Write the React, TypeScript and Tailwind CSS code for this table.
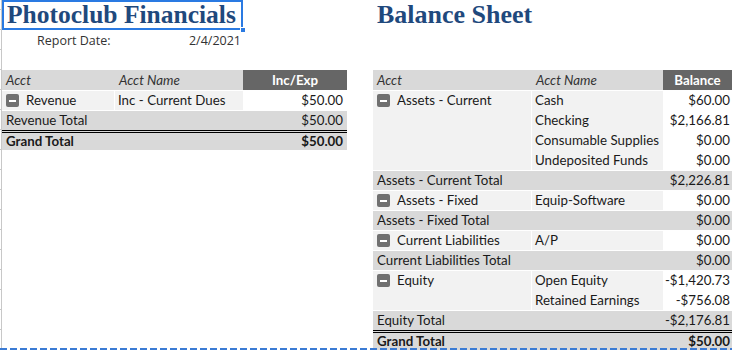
import { Fragment } from "react";

type Line = { name: string; value: string };
type Group = { acct: string; lines: Line[]; total: string };

const incomeGroups: Group[] = [
  {
    acct: "Revenue",
    lines: [{ name: "Inc - Current Dues", value: "$50.00" }],
    total: "$50.00",
  },
];

const balanceGroups: Group[] = [
  {
    acct: "Assets - Current",
    lines: [
      { name: "Cash", value: "$60.00" },
      { name: "Checking", value: "$2,166.81" },
      { name: "Consumable Supplies", value: "$0.00" },
      { name: "Undeposited Funds", value: "$0.00" },
    ],
    total: "$2,226.81",
  },
  {
    acct: "Assets - Fixed",
    lines: [{ name: "Equip-Software", value: "$0.00" }],
    total: "$0.00",
  },
  {
    acct: "Current Liabilities",
    lines: [{ name: "A/P", value: "$0.00" }],
    total: "$0.00",
  },
  {
    acct: "Equity",
    lines: [
      { name: "Open Equity", value: "-$1,420.73" },
      { name: "Retained Earnings", value: "-$756.08" },
    ],
    total: "-$2,176.81",
  },
];

interface PivotProps {
  groups: Group[];
  valueLabel: string;
  grandTotal: string;
  acctW: string;
  nameW: string;
  valW: string;
  valPad: string;
}

function MinusBox() {
  return (
    <span className="w-[13px] h-[13px] rounded-[2px] bg-[#707070] flex items-center justify-center shrink-0">
      <span className="w-[7px] h-[2px] bg-white" />
    </span>
  );
}

function PivotTable({
  groups,
  valueLabel,
  grandTotal,
  acctW,
  nameW,
  valW,
  valPad,
}: PivotProps) {
  return (
    <div className="flex flex-col shrink-0 text-[13.3px] leading-5 text-[#1a1a1a] font-['Lato',sans-serif]">
      <div className="flex h-5">
        <div className={`${acctW} bg-[#d9d9d9] pl-1 italic text-[#333]`}>Acct</div>
        <div className={`${nameW} bg-[#d9d9d9] pl-1 italic text-[#333]`}>Acct Name</div>
        <div className={`${valW} bg-[#666666] text-white font-bold text-center`}>
          {valueLabel}
        </div>
      </div>
      {groups.map((g) => (
        <Fragment key={g.acct}>
          <div className="flex">
            <div
              className={`${acctW} bg-[#f2f2f2] border-r border-t border-white flex items-start gap-[7px] pl-1 pt-[3px]`}
            >
              <MinusBox />
              <span className="-mt-[4px]">{g.acct}</span>
            </div>
            <div className="flex flex-col">
              {g.lines.map((l, i) => (
                <div key={l.name} className="flex h-5">
                  <div
                    className={`${nameW} bg-[#f2f2f2] pl-[3px] whitespace-nowrap ${i === 0 ? "border-t border-white leading-[19px]" : ""}`}
                  >
                    {l.name}
                  </div>
                  <div className={`${valW} bg-white text-right ${valPad}`}>{l.value}</div>
                </div>
              ))}
            </div>
          </div>
          <div className="flex h-5 bg-[#d9d9d9] border-t border-white leading-[19px]">
            <span className="flex-1 pl-1">{g.acct} Total</span>
            <span className={valPad}>{g.total}</span>
          </div>
        </Fragment>
      ))}
      <div className="flex h-5 bg-[#d9d9d9] border-t-[3px] border-double border-black font-bold leading-[17px]">
        <span className="flex-1 pl-1">Grand Total</span>
        <span className={valPad}>{grandTotal}</span>
      </div>
    </div>
  );
}

export default function App() {
  return (
    <div className="w-[732px] h-[350px] bg-white relative overflow-hidden flex">
      <div className="w-[2px] shrink-0 border-r border-[#c8c8c8] bg-[repeating-linear-gradient(180deg,transparent_0_9px,#c8c8c8_9px_10px,transparent_10px_20px)]" />

      <div className="flex flex-col w-[345px] shrink-0">
        <div className="relative w-[241px] h-[30px] shrink-0 border-2 border-[#2a7ae2] pl-[3px]">
          <h1 className="font-['Liberation_Serif',serif] font-bold text-[25.5px] leading-[26px] text-[#1f497d] whitespace-nowrap">
            Photoclub Financials
          </h1>
          <span className="absolute -right-[5px] -bottom-[5px] w-[6px] h-[6px] bg-[#2a7ae2] border border-white" />
        </div>
        <div className="flex w-[239px] h-[22px] shrink-0 items-center font-['Open_Sans',sans-serif] text-[12.5px] text-[#333]">
          <span className="pl-[35px] flex-1">Report Date:</span>
          <span>2/4/2021</span>
        </div>
        <div className="h-[18px] shrink-0" />
        <PivotTable
          groups={incomeGroups}
          valueLabel="Inc/Exp"
          grandTotal="$50.00"
          acctW="w-[113px]"
          nameW="w-[128px]"
          valW="w-[104px]"
          valPad="pr-1"
        />
      </div>

      <div className="w-[26px] shrink-0" />

      <div className="flex flex-col w-[359px] shrink-0">
        <h2 className="pl-1 h-[30px] shrink-0 font-['Liberation_Serif',serif] font-bold text-[26px] leading-[30px] text-[#1f497d] whitespace-nowrap">
          Balance Sheet
        </h2>
        <div className="h-[40px] shrink-0" />
        <PivotTable
          groups={balanceGroups}
          valueLabel="Balance"
          grandTotal="$50.00"
          acctW="w-[159px]"
          nameW="w-[131px]"
          valW="w-[69px]"
          valPad="pr-[2px]"
        />
      </div>

      {/* page break marker */}
      <div className="absolute left-0 right-0 bottom-0 h-[2px] bg-[repeating-linear-gradient(90deg,#3b7bd4_0_7px,transparent_7px_10px)]" />
    </div>
  );
}
